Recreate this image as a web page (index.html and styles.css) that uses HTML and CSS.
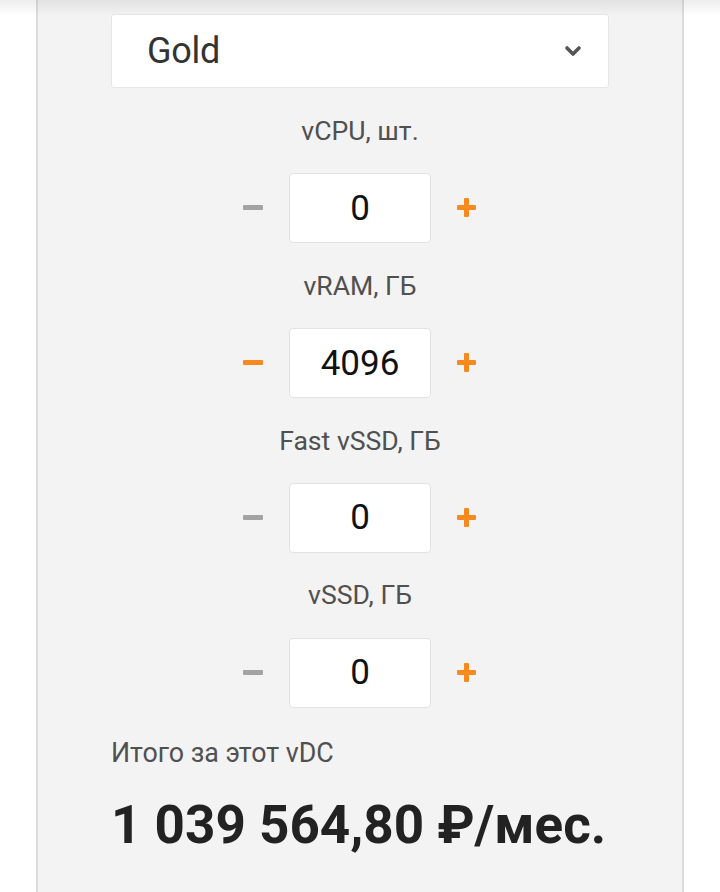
FILE: index.html
```html
<!DOCTYPE html>
<html lang="ru">
<head>
<meta charset="utf-8">
<link rel="stylesheet" href="styles.css">
</head>
<body>
<div class="panel">
  <div class="content">
    <div class="select">
      <span class="select-value">Gold</span>
      <svg class="chevron" width="18" height="12" viewBox="0 0 18 12"><path d="M3 3 L9 9 L15 3" fill="none" stroke="#555" stroke-width="3.6" stroke-linecap="round" stroke-linejoin="round"/></svg>
    </div>

    <div class="field">
      <div class="label">vCPU, шт.</div>
      <div class="stepper">
        <button class="btn minus disabled"><span class="bar h"></span></button>
        <div class="value">0</div>
        <button class="btn plus"><span class="bar h"></span><span class="bar v"></span></button>
      </div>
    </div>

    <div class="field">
      <div class="label">vRAM, ГБ</div>
      <div class="stepper">
        <button class="btn minus"><span class="bar h"></span></button>
        <div class="value">4096</div>
        <button class="btn plus"><span class="bar h"></span><span class="bar v"></span></button>
      </div>
    </div>

    <div class="field">
      <div class="label">Fast vSSD, ГБ</div>
      <div class="stepper">
        <button class="btn minus disabled"><span class="bar h"></span></button>
        <div class="value">0</div>
        <button class="btn plus"><span class="bar h"></span><span class="bar v"></span></button>
      </div>
    </div>

    <div class="field">
      <div class="label">vSSD, ГБ</div>
      <div class="stepper">
        <button class="btn minus disabled"><span class="bar h"></span></button>
        <div class="value">0</div>
        <button class="btn plus"><span class="bar h"></span><span class="bar v"></span></button>
      </div>
    </div>

    <div class="total-label">Итого за этот vDC</div>
    <div class="total">1 039 564,80 ₽/мес.</div>
  </div>
</div>
</body>
</html>
```

FILE: styles.css
```css
html, body {
  margin: 0;
  padding: 0;
  background: #ffffff;
  font-family: Roboto, "Noto Sans", sans-serif;
}

body {
  position: relative;
  height: 892px;
  overflow: hidden;
}

body::before {
  content: "";
  position: absolute;
  left: 0;
  top: 0;
  right: 0;
  height: 16px;
  background: linear-gradient(to bottom, rgba(0,0,0,0.07), rgba(0,0,0,0));
  z-index: 2;
}

.panel {
  margin: 0 36px;
  border-left: 2px solid #dcdcdc;
  border-right: 2px solid #dcdcdc;
  background: #f3f3f3;
  min-height: 892px;
}

.content {
  width: 498px;
  margin-left: 73px;
  padding-top: 14px;
  display: flex;
  flex-direction: column;
}

.select {
  height: 74px;
  box-sizing: border-box;
  background: #fff;
  border: 1px solid #e6e6e6;
  border-radius: 3px;
  display: flex;
  align-items: center;
  justify-content: space-between;
  padding: 0 26px 0 35px;
}

.select-value {
  font-size: 36px;
  color: #333;
  letter-spacing: -0.3px;
}

.field {
  display: flex;
  flex-direction: column;
  align-items: center;
  margin-top: 28px;
}

.field + .field {
  margin-top: 27.5px;
}

.label {
  height: 30px;
  line-height: 30px;
  font-size: 26.6px;
  color: #505050;
}

.stepper {
  margin-top: 27.3px;
  display: flex;
  align-items: center;
  gap: 16px;
}

.btn {
  width: 40px;
  height: 40px;
  padding: 0;
  border: 0;
  background: transparent;
  position: relative;
}

.bar {
  position: absolute;
  background: #f68a1e;
  border-radius: 1px;
}

.bar.h {
  width: 19px;
  height: 5px;
  left: 10px;
  top: 17px;
}

.bar.v {
  width: 5px;
  height: 19px;
  left: 17px;
  top: 10px;
}

.minus.disabled .bar {
  background: #a3a3a3;
}

.minus .bar.h {
  width: 20px;
  height: 5px;
}

.value {
  width: 142px;
  height: 70px;
  box-sizing: border-box;
  background: #fff;
  border: 1.5px solid #e2e2e2;
  border-radius: 4px;
  display: flex;
  align-items: center;
  justify-content: center;
  font-size: 35px;
  color: #111;
}

.total-label {
  margin-top: 30px;
  font-size: 26.8px;
  line-height: 30px;
  color: #505050;
}

.total {
  margin-top: 27px;
  font-size: 53px;
  line-height: 60px;
  font-weight: 700;
  color: #222;
}
```
